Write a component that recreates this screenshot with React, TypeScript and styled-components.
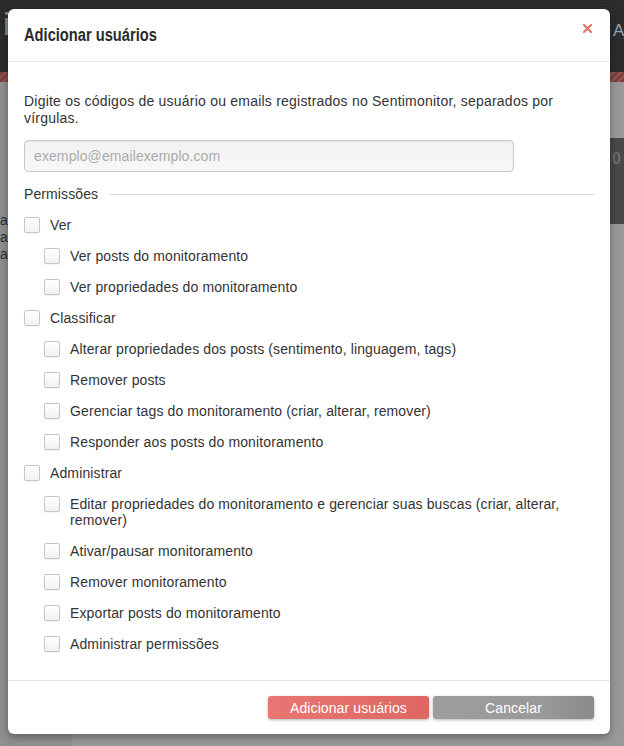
import React from "react";
import styled, { createGlobalStyle } from "styled-components";

const GlobalStyle = createGlobalStyle`
  html, body { margin: 0; padding: 0; }
  body { font-family: "Liberation Sans", Arial, sans-serif; background: #999; }
  * { box-sizing: border-box; }
`;

const Page = styled.div`
  position: relative;
  width: 624px;
  height: 746px;
  overflow: hidden;
  display: flex;
  flex-direction: column;
  background: #999;
`;

const TopBar = styled.div`
  height: 72px;
  background-color: #2b2b2b;
  background-image: radial-gradient(#333 1px, transparent 1px);
  background-size: 3px 3px;
  display: flex;
  justify-content: space-between;
  align-items: flex-start;
`;

const Logo = styled.span`
  font-family: "Liberation Sans", Arial, sans-serif;
  font-size: 32px;
  line-height: 32px;
  color: #8a8a8a;
  margin: 8px 0 0 3px;
`;

const NavText = styled.span`
  font-family: "Liberation Sans", Arial, sans-serif;
  font-size: 17px;
  line-height: 20px;
  color: #9aa3ad;
  margin: 21px 0 0 0;
  width: 11px;
  white-space: nowrap;
`;

const Stripe = styled.div`
  height: 10px;
  background: repeating-linear-gradient(
    135deg,
    #7c3e3e 0px,
    #7c3e3e 3px,
    #955454 3px,
    #955454 5px
  );
`;

const Main = styled.div`
  flex: 1;
  display: flex;
`;

const Sidebar = styled.div`
  width: 72px;
  background: #8f8f8f;
  padding-top: 130px;
  display: flex;
  flex-direction: column;
`;

const SideLine = styled.span`
  font-size: 14px;
  line-height: 17px;
  color: #2e2e2e;
`;

const Content = styled.div`
  flex: 1;
  padding-top: 56px;
`;

const DarkPanel = styled.div`
  height: 86px;
  background: #484848;
  display: flex;
  justify-content: flex-end;
  padding: 12px 2px 0 0;
`;

const PanelNum = styled.span`
  font-size: 16px;
  font-weight: bold;
  color: #6d6d6d;
  width: 10px;
  overflow: hidden;
`;

const Modal = styled.div`
  position: absolute;
  top: 9px;
  left: 8px;
  width: 602px;
  height: 725px;
  background: #fff;
  border-radius: 6px;
  box-shadow: 0 3px 9px rgba(0, 0, 0, 0.35);
  display: flex;
  flex-direction: column;
  color: #333;
`;

const Header = styled.div`
  display: flex;
  align-items: flex-start;
  padding: 16px 18px 16px 16px;
  border-bottom: 1px solid #e5e5e5;
`;

const Title = styled.h3`
  flex: 1;
  margin: 0;
  font-family: "Liberation Sans", Arial, sans-serif;
  font-weight: bold;
  font-size: 18px;
  line-height: 20px;
  color: #2b2b2b;
  transform: scaleX(0.815);
  transform-origin: left center;
  white-space: nowrap;
`;

const CloseButton = styled.button`
  border: 0;
  background: transparent;
  padding: 0;
  margin-top: -1px;
  width: 9px;
  height: 9px;
  display: flex;
  cursor: pointer;
`;

const Body = styled.div`
  flex: 1;
  padding: 31px 16px 0 16px;
  display: flex;
  flex-direction: column;
`;

const Intro = styled.p`
  margin: 0;
  font-size: 14px;
  line-height: 17px;
  letter-spacing: 0.22px;
  color: #333;
`;

const EmailInput = styled.input`
  margin-top: 13px;
  width: 490px;
  height: 32px;
  border: 1px solid #c9c9c9;
  border-radius: 4px;
  background: linear-gradient(#f2f2f2, #f7f7f7);
  box-shadow: inset 0 1px 2px rgba(0, 0, 0, 0.06);
  padding: 0 9px;
  font-family: "Liberation Sans", Arial, sans-serif;
  font-size: 14px;
  letter-spacing: 0.1px;
  color: #333;
  outline: none;
  &::placeholder { color: #aaa; }
`;

const Legend = styled.div`
  margin-top: 14px;
  display: flex;
  align-items: center;
  gap: 12px;
  font-size: 14px;
  line-height: 17px;
  letter-spacing: 0.1px;
  color: #333;
  &::after {
    content: "";
    flex: 1;
    height: 1px;
    background: #dcdcdc;
  }
`;

const List = styled.div`
  margin-top: 14px;
  display: flex;
  flex-direction: column;
  gap: 15px;
`;

const Item = styled.label<{ $child?: boolean }>`
  display: flex;
  align-items: flex-start;
  gap: 10px;
  padding-left: ${(p) => (p.$child ? "20px" : "0")};
  font-size: 14px;
  line-height: 16px;
  letter-spacing: 0.12px;
  color: #333;
  cursor: pointer;
`;

const Box = styled.span`
  flex: none;
  width: 16px;
  height: 16px;
  border: 1px solid #c6c6c6;
  border-radius: 2px;
  background: linear-gradient(#fff, #f1f1f1);
  box-shadow: 0 1px 1px rgba(0, 0, 0, 0.05);
`;

const Footer = styled.div`
  border-top: 1px solid #e5e5e5;
  padding: 15px 16px;
  display: flex;
  justify-content: flex-end;
  gap: 4px;
`;

const Button = styled.button<{ $variant: "primary" | "secondary" }>`
  width: 161px;
  height: 23px;
  border: 0;
  border-radius: 3px;
  font-family: "Liberation Sans", Arial, sans-serif;
  font-size: 14px;
  letter-spacing: 0.1px;
  color: #fff;
  cursor: pointer;
  box-shadow: 0 1px 3px rgba(0, 0, 0, 0.3);
  background: ${(p) =>
    p.$variant === "primary"
      ? "linear-gradient(to right, #e97672, #de6762)"
      : "linear-gradient(to right, #9d9d9d 0%, #999 70%, #8a8a8a 100%)"};
`;

type Perm = { label: string; child?: boolean };

const perms: Perm[] = [
  { label: "Ver" },
  { label: "Ver posts do monitoramento", child: true },
  { label: "Ver propriedades do monitoramento", child: true },
  { label: "Classificar" },
  { label: "Alterar propriedades dos posts (sentimento, linguagem, tags)", child: true },
  { label: "Remover posts", child: true },
  { label: "Gerenciar tags do monitoramento (criar, alterar, remover)", child: true },
  { label: "Responder aos posts do monitoramento", child: true },
  { label: "Administrar" },
  {
    label:
      "Editar propriedades do monitoramento e gerenciar suas buscas (criar, alterar, remover)",
    child: true,
  },
  { label: "Ativar/pausar monitoramento", child: true },
  { label: "Remover monitoramento", child: true },
  { label: "Exportar posts do monitoramento", child: true },
  { label: "Administrar permissões", child: true },
];

export default function App() {
  return (
    <>
      <GlobalStyle />
      <Page>
        <TopBar>
          <Logo>i</Logo>
          <NavText>Aj</NavText>
        </TopBar>
        <Stripe />
        <Main>
          <Sidebar>
            <SideLine>a</SideLine>
            <SideLine>ar</SideLine>
            <SideLine>ar</SideLine>
          </Sidebar>
          <Content>
            <DarkPanel>
              <PanelNum>0</PanelNum>
            </DarkPanel>
          </Content>
        </Main>

        <Modal>
          <Header>
            <Title>Adicionar usuários</Title>
            <CloseButton aria-label="Fechar">
              <svg width="9" height="9" viewBox="0 0 9 9">
                <path
                  d="M1 1 L8 8 M8 1 L1 8"
                  stroke="#e8736d"
                  strokeWidth="2.2"
                  strokeLinecap="square"
                />
              </svg>
            </CloseButton>
          </Header>
          <Body>
            <Intro>
              Digite os códigos de usuário ou emails registrados no Sentimonitor, separados por
              vírgulas.
            </Intro>
            <EmailInput placeholder="exemplo@emailexemplo.com" />
            <Legend>Permissões</Legend>
            <List>
              {perms.map((p) => (
                <Item key={p.label} $child={p.child}>
                  <Box />
                  <span>{p.label}</span>
                </Item>
              ))}
            </List>
          </Body>
          <Footer>
            <Button $variant="primary">Adicionar usuários</Button>
            <Button $variant="secondary">Cancelar</Button>
          </Footer>
        </Modal>
      </Page>
    </>
  );
}
